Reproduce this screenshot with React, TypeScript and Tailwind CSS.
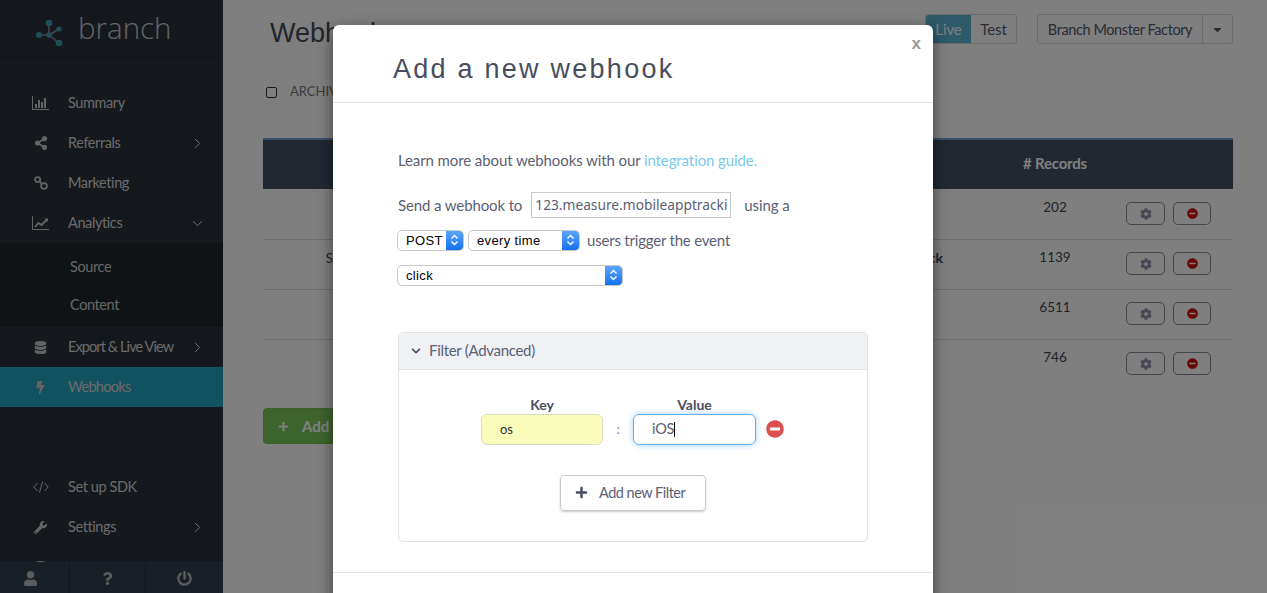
import React from "react";
import { ChevronRight, ChevronDown } from "lucide-react";
import { FaShareAlt, FaDatabase, FaBolt, FaWrench, FaUser, FaQuestion, FaPowerOff, FaCog, FaMinusCircle, FaPlus, FaChevronDown, FaCaretDown } from "react-icons/fa";

const BarIcon = () => (
  <svg width="17" height="14" viewBox="0 0 17 14" fill="currentColor">
    <path d="M0 0h1v13h16v1H0z" />
    <rect x="3" y="8" width="2" height="4" />
    <rect x="6" y="4" width="2" height="8" />
    <rect x="9" y="6" width="2" height="6" />
    <rect x="12" y="2" width="2" height="10" />
  </svg>
);
const LineIcon = () => (
  <svg width="17" height="14" viewBox="0 0 17 14" fill="none" stroke="currentColor">
    <path d="M.5 0v13.5H17" />
    <path d="M3 11l3.5-4 3 2L15 3.5" strokeWidth="1.8" />
    <path d="M12.5 2.5h3.5V6z" fill="currentColor" stroke="none" />
  </svg>
);
const LinkIcon = () => (
  <svg width="14" height="14" viewBox="0 0 14 14" fill="none" stroke="currentColor" strokeWidth="1.7">
    <circle cx="3.6" cy="3.6" r="2.6" />
    <circle cx="10" cy="10" r="2.9" />
    <path d="M5.4 5.4l3 3" />
  </svg>
);
const CodeIcon = () => (
  <svg width="16" height="12" viewBox="0 0 16 12" fill="none" stroke="currentColor" strokeWidth="1">
    <path d="M4.5 2L.8 6l3.7 4M11.5 2l3.7 4-3.7 4M9.5.5L6.5 11.5" />
  </svg>
);
const Logo = () => (
  <svg width="30" height="30" viewBox="0 0 30 30" className="text-[#3f9ab4]">
    <g stroke="#7f8f98" strokeWidth="1.6">
      <path d="M5 18h10M15 18V6M15 18L25 12M15 18L25 26" />
    </g>
    <g fill="currentColor">
      <circle cx="15" cy="6" r="3.3" />
      <circle cx="5" cy="18" r="3" />
      <circle cx="15" cy="18" r="2.8" />
      <circle cx="25" cy="12" r="2.6" />
      <circle cx="25" cy="26" r="3.3" />
    </g>
  </svg>
);

function NavRow({ icon, label, arrow, active, down, track = "tracking-[-0.4px]" }: { icon?: React.ReactNode; label?: string; arrow?: boolean; active?: boolean; down?: boolean; track?: string }) {
  return (
    <div className={`h-10 flex items-center pl-[32px] pr-[17px] ${active ? "bg-[#25a4bf]" : ""}`}>
      <span className="w-[17px] flex justify-center text-[#c9c9c9] shrink-0">{icon}</span>
      <span className={`ml-[19px] flex-1 text-[14.5px] leading-[18px] -mt-[1px] whitespace-nowrap text-[#d6d6d6] ${track}`}>{label}</span>
      {arrow && (down ? <ChevronDown size={17} strokeWidth={1.4} className="text-[#dcdcdc]" /> : <ChevronRight size={17} strokeWidth={1.4} className="text-[#dcdcdc]" />)}
    </div>
  );
}

function Sidebar() {
  return (
    <aside className="relative w-[223px] h-full shrink-0 bg-[#2a323b] overflow-hidden">
      <div className="h-[64px] flex items-center pl-[34px] border-b border-[#313a44]">
        <Logo />
        <span className="ml-[14px] font-['Open_Sans',sans-serif] font-light text-[29.5px] leading-none text-[#c9c9c9] -mt-[7px]">branch</span>
      </div>
      <div className="pt-[19px]">
        <NavRow icon={<BarIcon />} label="Summary" />
        <NavRow icon={<FaShareAlt size={14} />} label="Referrals" arrow />
        <NavRow icon={<LinkIcon />} label="Marketing" />
        <NavRow icon={<LineIcon />} label="Analytics" arrow down />
        <div className="h-[84px] bg-[#1f262d] pt-[5px] pl-[70px] text-[14.5px] text-[#d0d0d0] tracking-[-0.4px]">
          <div className="h-[38px] flex items-center">Source</div>
          <div className="h-[38px] flex items-center">Content</div>
        </div>
        <NavRow icon={<FaDatabase size={13} />} label="Export & Live View" arrow track="tracking-[-0.9px]" />
        <NavRow icon={<FaBolt size={13} />} label="Webhooks" active track="tracking-[-0.7px]" />
        <div className="h-[60px]" />
        <NavRow icon={<CodeIcon />} label="Set up SDK" />
        <NavRow icon={<FaWrench size={13} />} label="Settings" arrow />
        <NavRow icon={<FaDatabase size={13} />} />
      </div>
      <div className="absolute left-0 right-0 bottom-0 h-[31px] flex bg-[#313e4d] border-t border-[#38434f] text-[#b9b9b9]">
        <div className="w-[70px] flex items-center justify-center pr-[8px] border-r border-[#252e38]"><FaUser size={15} /></div>
        <div className="w-[76px] flex items-center justify-center border-r border-[#252e38]"><FaQuestion size={13} /></div>
        <div className="flex-1 flex items-center justify-center"><FaPowerOff size={15} /></div>
      </div>
    </aside>
  );
}

function Row({ left, right, n, first }: { left?: string; right?: string; n: string; first?: boolean }) {
  return (
    <div className={`h-[50px] flex border-t ${first ? "border-transparent" : "border-[#dcdcdc]"}`}>
      <div className="w-[70px] pt-[7px] text-right text-[14px] text-[#4a4a55]">{left}</div>
      <div className="flex-1 pt-[7px] pr-[52px] text-right text-[14px] font-bold text-[#3a4150]">{right}</div>
      <div className="w-[238px] flex">
        <div className="w-[120px] pt-[7px] text-[13.5px] text-center text-[#444854]">{n}</div>
        <div className="flex gap-[8px] pt-[12px] pl-[11px]">
          <div className="w-[39px] h-[23px] border border-[#8a8aa0] rounded-[5px] flex items-center justify-center text-[#8f90a8]"><FaCog size={12} /></div>
          <div className="w-[38px] h-[23px] border border-[#8a8aa0] rounded-[5px] flex items-center justify-center text-[#d20f0f]"><FaMinusCircle size={11} /></div>
        </div>
      </div>
    </div>
  );
}

function Main() {
  return (
    <main className="flex-1 h-full bg-white overflow-hidden pl-[40px] pr-[34px] pt-[14px]">
      <div className="flex items-start">
        <div className="flex-1 pl-[7px] pt-[3px] font-['Liberation_Sans',sans-serif] text-[27px] leading-[32px] text-[#474b58]">Webhooks</div>
        <div className="flex h-[30px] border border-[#d6d6d6] rounded-[3px] text-[15px] text-[#55586a] tracking-[-0.1px]">
          <div className="w-[45px] flex items-center justify-center bg-[#5cb4d2] text-white rounded-l-[3px]">Live</div>
          <div className="w-[45px] flex items-center justify-center">Test</div>
        </div>
        <div className="flex h-[30px] ml-[20px] border border-[#d6d6d6] rounded-[3px] text-[14.5px] tracking-[-0.4px] text-[#55586a]">
          <div className="w-[165px] pt-[1px] flex items-center justify-center border-r border-[#d6d6d6]">Branch Monster Factory</div>
          <div className="w-[29px] flex items-center justify-center"><FaCaretDown size={13} /></div>
        </div>
      </div>
      <div className="flex items-center mt-[28px] pl-[3px] h-[30px]">
        <span className="w-[11px] h-[11px] border border-[#333] rounded-[2px]" />
        <span className="ml-[13px] text-[13px] text-[#777]">ARCHIVED</span>
      </div>
      <div className="mt-[31px] h-[51px] pb-[2px] border-t-2 border-[#6f9ccb] bg-[#425064] flex items-center justify-end text-[15px] font-bold tracking-[-0.2px] text-white pr-[146px]"># Records</div>
      <Row n="202" first />
      <Row n="1139" left="S" right="click" />
      <Row n="6511" />
      <Row n="746" />
      <div className="mt-[19px] w-[170px] h-[36px] rounded-[4px] bg-[#7cc95a] border border-[#76bd56] flex items-center pl-[14px] text-white text-[15px] font-bold">
        <FaPlus size={11} />
        <span className="ml-[13px]">Add a webhook</span>
      </div>
    </main>
  );
}

const Stepper = () => (
  <span className="shrink-0 flex items-center justify-center h-full bg-gradient-to-b from-[#5ba6fb] to-[#1170ee] rounded-r-[4px] w-[17px]">
    <svg width="9" height="14" viewBox="0 0 9 14" fill="none" stroke="white" strokeWidth="1.4"><path d="M1.5 5.5L4.5 2.5l3 3M1.5 8.5l3 3 3-3" /></svg>
  </span>
);

function Sel({ label, className }: { label: string; className: string }) {
  return (
    <div className={`h-[21px] flex border border-[#c8c8c8] rounded-[5px] bg-white font-['Liberation_Sans',sans-serif] text-[13px] tracking-[0.35px] text-black ${className}`}>
      <span className="flex-1 pl-[8px] leading-[20px]">{label}</span>
      <Stepper />
    </div>
  );
}

function Modal() {
  return (
    <div className="absolute left-[333px] top-[25px] w-[600px] h-[640px] bg-white rounded-[6px] shadow-[0_5px_15px_rgba(0,0,0,0.5)] text-[#5b6072]">
      <div className="relative h-[78px] border-b border-[#e5e5e5] pl-[60px] pt-[27px] font-['Liberation_Sans',sans-serif] text-[27px] leading-[34px] tracking-[2.25px] text-[#4a4d5e]">
        Add a new webhook
        <span className="absolute right-[12px] top-[9px] text-[17px] leading-[20px] font-bold tracking-normal text-[#9a9a9a]">x</span>
      </div>
      <div className="pl-[65px] pt-[47px] text-[15px]">
        <div className="h-[20px] leading-[20px] tracking-[-0.1px]">Learn more about webhooks with our <span className="text-[#79c9ee]">integration guide.</span></div>
        <div className="mt-[22px] flex items-center h-[26px]">
          <span className="tracking-[-0.12px]">Send a webhook to</span>
          <div className="ml-[9px] w-[200px] h-[26px] border border-[#c9c9c9] pl-[3px] leading-[24px] whitespace-nowrap font-['Noto_Sans',sans-serif] text-[13.75px]">123.measure.mobileapptracki</div>
          <span className="ml-[13px] tracking-[-0.1px]">using a</span>
        </div>
        <div className="mt-[11px] flex items-center -ml-[1px]">
          <Sel label="POST" className="w-[67px]" />
          <Sel label="every time" className="w-[112px] ml-[4px]" />
          <span className="ml-[7px] tracking-[-0.2px]">users trigger the event</span>
        </div>
        <Sel label="click" className="w-[226px] mt-[13px] -ml-[1px]" />
      </div>
      <div className="mx-[65px] mt-[46px] h-[210px] border border-[#e2e2e2] rounded-[5px]">
        <div className="h-[37px] bg-[#eff1f5] border-b border-[#dfe1e5] rounded-t-[5px] flex items-center pl-[12px]">
          <FaChevronDown size={10} className="text-[#4c5162]" />
          <span className="ml-[8px] text-[15px] tracking-[-0.3px]">Filter (Advanced)</span>
        </div>
        <div className="flex pl-[82px] pt-[26px]">
          <div className="w-[122px]">
            <div className="text-center text-[14px] leading-[18px] font-bold text-[#4a4d5e]">Key</div>
            <div className="h-[31px] bg-[#fafcbc] border border-[#dcdcc0] rounded-[6px] pl-[18px] leading-[29px] text-[13px] text-[#333]">os</div>
          </div>
          <div className="w-[30px] pt-[18px] text-center leading-[31px] text-[13px] text-[#6f93b4]">:</div>
          <div className="w-[123px]">
            <div className="text-center text-[14px] leading-[18px] font-bold text-[#4a4d5e]">Value</div>
            <div className="h-[31px] border border-[#66afe9] rounded-[6px] shadow-[0_0_6px_rgba(102,175,233,0.6)] pl-[18px] text-[14.5px] tracking-[-0.2px] flex items-center">iOS<span className="w-px h-[15px] bg-black" /></div>
          </div>
          <div className="pt-[24px] pl-[10px] text-[#db4f50]"><FaMinusCircle size={18} /></div>
        </div>
        <div className="flex justify-center mt-[30px]">
          <div className="w-[146px] h-[36px] border border-[#c9c9c9] rounded-[4px] shadow-[0_1px_2px_rgba(0,0,0,0.2)] flex items-center pl-[14px] text-[14.5px] tracking-[-0.5px]">
            <FaPlus size={13} className="text-[#4a4d5e]" />
            <span className="ml-[11px]">Add new Filter</span>
          </div>
        </div>
      </div>
      <div className="mt-[30px] border-t border-[#e5e5e5]" />
    </div>
  );
}

export default function App() {
  return (
    <div className="relative h-screen w-full overflow-hidden flex font-['Lato','Noto_Sans',sans-serif]">
      <Sidebar />
      <Main />
      <div className="absolute inset-0 bg-black/50" />
      <Modal />
    </div>
  );
}
